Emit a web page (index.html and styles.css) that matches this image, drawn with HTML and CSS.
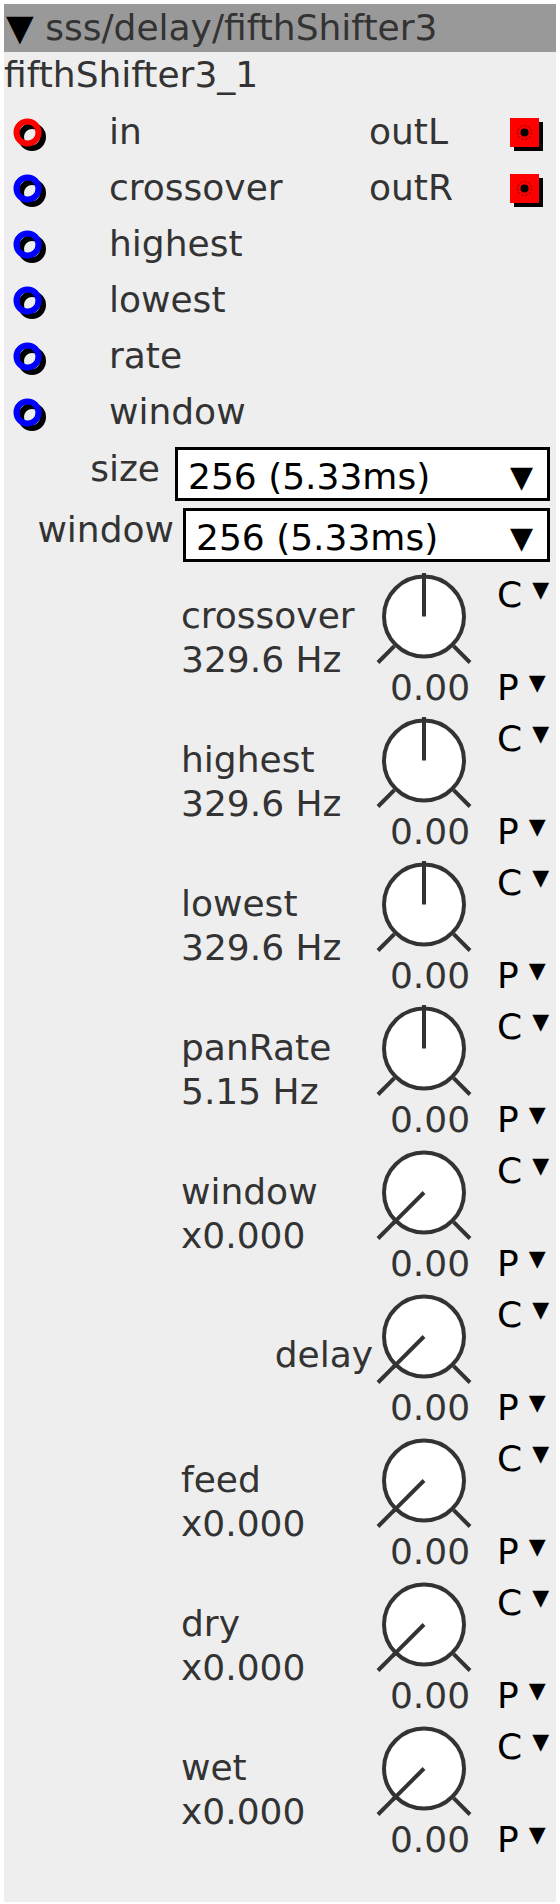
FILE: index.html
```html
<!DOCTYPE html>
<html>
<head>
    <meta charset="UTF-8">
    <title>fifthShifter3</title>
    <link rel="stylesheet" href="styles.css">
</head>
<body>
<div class="module">
    <div class="title"><span class="title-arrow">▼</span> sss/delay/fifthShifter3</div>
    <div class="name">fifthShifter3_1</div>

    <div class="ports">
        <div class="port-cell"><svg class="jack" viewBox="0 0 40 40"><circle cx="19" cy="19" r="11" class="jack-shadow"/><circle cx="14.5" cy="14.5" r="11" class="jack-ring jack-audio"/></svg></div>
        <div>in</div>
        <div>outL</div>
        <div class="port-cell"><svg class="plug" viewBox="0 0 40 40"><rect x="4" y="4" width="29" height="29" fill="#000"/><rect x="0" y="0" width="29" height="29" fill="#f00"/><circle cx="14.5" cy="14.5" r="7" class="plug-ring"/><circle cx="14.5" cy="14.5" r="4" fill="#000"/></svg></div>

        <div class="port-cell"><svg class="jack" viewBox="0 0 40 40"><circle cx="19" cy="19" r="11" class="jack-shadow"/><circle cx="14.5" cy="14.5" r="11" class="jack-ring jack-ctrl"/></svg></div>
        <div>crossover</div>
        <div>outR</div>
        <div class="port-cell"><svg class="plug" viewBox="0 0 40 40"><rect x="4" y="4" width="29" height="29" fill="#000"/><rect x="0" y="0" width="29" height="29" fill="#f00"/><circle cx="14.5" cy="14.5" r="7" class="plug-ring"/><circle cx="14.5" cy="14.5" r="4" fill="#000"/></svg></div>

        <div class="port-cell"><svg class="jack" viewBox="0 0 40 40"><circle cx="19" cy="19" r="11" class="jack-shadow"/><circle cx="14.5" cy="14.5" r="11" class="jack-ring jack-ctrl"/></svg></div>
        <div>highest</div>
        <div></div>
        <div></div>

        <div class="port-cell"><svg class="jack" viewBox="0 0 40 40"><circle cx="19" cy="19" r="11" class="jack-shadow"/><circle cx="14.5" cy="14.5" r="11" class="jack-ring jack-ctrl"/></svg></div>
        <div>lowest</div>
        <div></div>
        <div></div>

        <div class="port-cell"><svg class="jack" viewBox="0 0 40 40"><circle cx="19" cy="19" r="11" class="jack-shadow"/><circle cx="14.5" cy="14.5" r="11" class="jack-ring jack-ctrl"/></svg></div>
        <div>rate</div>
        <div></div>
        <div></div>

        <div class="port-cell"><svg class="jack" viewBox="0 0 40 40"><circle cx="19" cy="19" r="11" class="jack-shadow"/><circle cx="14.5" cy="14.5" r="11" class="jack-ring jack-ctrl"/></svg></div>
        <div>window</div>
        <div></div>
        <div></div>
    </div>

    <div class="field field-size">
        <label>size</label>
        <div class="select select-size"><span>256 (5.33ms)</span><span class="select-caret">▼</span></div>
    </div>
    <div class="field field-window">
        <label>window</label>
        <div class="select select-window"><span>256 (5.33ms)</span><span class="select-caret">▼</span></div>
    </div>

    <div id="knobs"></div>
</div>
<script>
    // name, value text, pointer at middle (true) or minimum (false)
    var knobs = [
        ["crossover", "329.6 Hz", true],
        ["highest", "329.6 Hz", true],
        ["lowest", "329.6 Hz", true],
        ["panRate", "5.15 Hz", true],
        ["window", "x0.000", false],
        ["delay", "", false],
        ["feed", "x0.000", false],
        ["dry", "x0.000", false],
        ["wet", "x0.000", false]
    ];

    var html = "";
    for (var i = 0; i < knobs.length; i++) {
        var k = knobs[i];
        var pointer = k[2]
            ? '<line x1="48" y1="44.5" x2="48" y2="1"/>'
            : '<line x1="48" y1="44.5" x2="16.9" y2="75.6"/>';
        var label = k[1] === ""
            ? '<div class="knob-label knob-label-single">' + k[0] + '</div>'
            : '<div class="knob-label">' + k[0] + '<br>' + k[1] + '</div>';
        html += '<div class="knob-row">' + label +
            '<div class="knob">' +
            '<svg class="knob-dial" viewBox="0 0 104 94">' +
            '<line x1="18.3" y1="74.2" x2="2" y2="90.5"/>' +
            '<line x1="77.7" y1="74.2" x2="94" y2="90.5"/>' +
            '<circle cx="48" cy="44.5" r="40"/>' + pointer +
            '</svg>' +
            '<div class="knob-value">0.00</div>' +
            '</div>' +
            '<div class="mod">' +
            '<div class="mod-c">C<span class="mod-caret">▼</span></div>' +
            '<div class="mod-p">P<span class="mod-caret">▼</span></div>' +
            '</div>' +
            '</div>';
    }
    document.getElementById("knobs").innerHTML = html;
</script>
</body>
</html>
```

FILE: styles.css
```css
body {
    margin: 4px;
    font-family: "DejaVu Sans", sans-serif;
    font-size: 36px;
    color: #333;
    background-color: #fff;
}
.module {
    background-color: #eee;
    padding-bottom: 34px;
}
.title {
    background-color: #999;
    height: 48px;
    line-height: 48px;
    padding-left: 2px;
    white-space: nowrap;
    overflow: hidden;
}
.title-arrow {
    color: #000;
}
.name {
    line-height: 45px;
    margin-bottom: 6px;
}

.ports {
    display: grid;
    grid-template-columns: 105px 260px 141px 1fr;
    grid-auto-rows: 56px;
    align-items: center;
}
.port-cell {
    align-self: stretch;
}
.jack {
    display: block;
    width: 40px;
    height: 40px;
    margin: 15px 0 0 9px;
}
.jack-shadow {
    fill: none;
    stroke: #000;
    stroke-width: 6;
}
.jack-ring {
    fill: none;
    stroke-width: 6;
}
.jack-audio {
    stroke: #f00;
}
.jack-ctrl {
    stroke: #00f;
}
.plug {
    display: block;
    width: 40px;
    height: 40px;
    margin-top: 15px;
}
.plug-ring {
    fill: none;
    stroke: #600;
    stroke-width: 1;
    stroke-dasharray: 2 2;
}

.field {
    display: flex;
    justify-content: flex-end;
    align-items: flex-start;
    padding-right: 6px;
}
.field-size {
    margin-top: 8px;
}
.field-window {
    margin-top: 7px;
    margin-bottom: 10px;
}
.field label {
    line-height: 44px;
    margin-right: 15px;
}
.field-window label {
    margin-right: 9px;
}
.select {
    box-sizing: border-box;
    height: 54px;
    border: 3px solid #000;
    background-color: #fff;
    color: #000;
    display: flex;
    align-items: center;
    justify-content: space-between;
    padding: 4px 14px 0 10px;
}
.select-size {
    width: 375px;
}
.select-window {
    width: 367px;
}
.select-caret {
    font-size: 30px;
}

.knob-row {
    display: flex;
    height: 144px;
}
.knob-label {
    box-sizing: border-box;
    width: 374px;
    padding: 22px 0 0 177px;
    line-height: 44px;
}
.knob-label-single {
    text-align: right;
    padding: 41px 5px 0 0;
}
.knob {
    width: 104px;
}
.knob-dial {
    display: block;
    width: 104px;
    height: 94px;
    margin-left: -2px;
    stroke: #333;
    stroke-width: 4;
}
.knob-dial circle {
    fill: #fff;
}
.knob-value {
    line-height: 44px;
    text-align: center;
}
.mod {
    display: flex;
    flex-direction: column;
    justify-content: space-between;
    height: 138px;
    padding-left: 15px;
    color: #000;
}
.mod-c {
    line-height: 36px;
}
.mod-p {
    line-height: 44px;
}
.mod-caret {
    font-size: 22px;
    margin-left: 10px;
    vertical-align: 10px;
}
```
